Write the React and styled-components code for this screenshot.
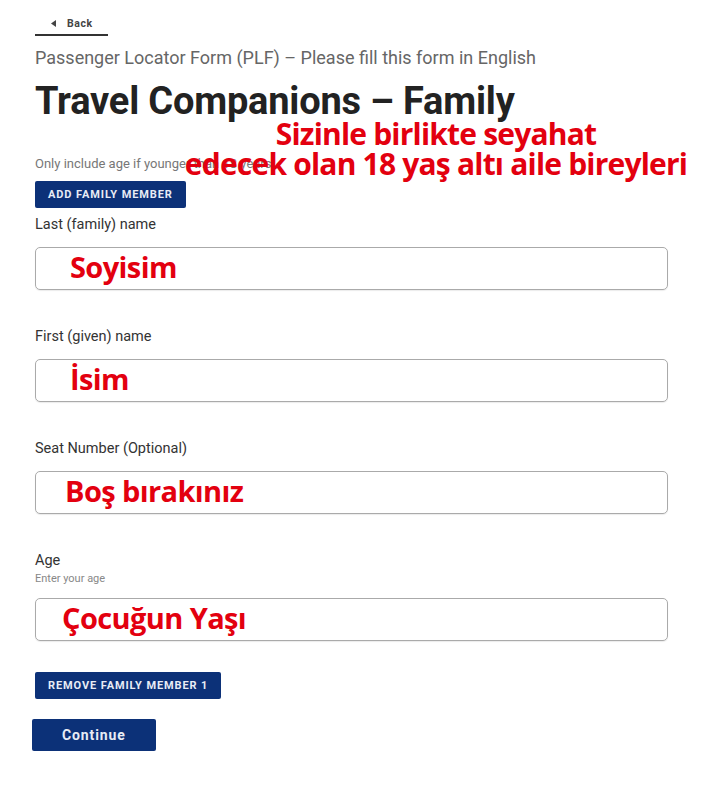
import React from 'react'
import styled, { createGlobalStyle } from 'styled-components'

const GlobalStyle = createGlobalStyle`
  html, body {
    margin: 0;
    padding: 0;
    background: #fff;
  }
  body {
    font-family: Roboto, "Liberation Sans", sans-serif;
    color: #222;
  }
`

const Page = styled.div`
  position: relative;
  width: 711px;
  height: 800px;
  padding: 12px 43px 0 35px;
  box-sizing: border-box;
`

const BackLink = styled.a`
  display: flex;
  align-items: center;
  gap: 11px;
  width: 73px;
  height: 24px;
  padding-left: 16px;
  box-sizing: border-box;
  border-bottom: 2px solid #333;
  color: #444;
  font-size: 10.5px;
  font-weight: 700;
  letter-spacing: 0.6px;
  text-decoration: none;
  cursor: pointer;
`

const Subtitle = styled.p`
  margin: 11px 0 0;
  font-size: 18px;
  line-height: 21px;
  color: #666;
`

const Title = styled.h1`
  margin: 11px 0 0;
  font-size: 38px;
  line-height: 44px;
  font-weight: 700;
  color: #222;
  letter-spacing: -0.2px;
`

const Hint = styled.p`
  margin: 33px 0 0;
  font-size: 13px;
  line-height: 15px;
  color: #777;
`

const Button = styled.button`
  display: block;
  border: none;
  border-radius: 2px;
  background: #0c3178;
  color: #e8ecf5;
  font-family: Roboto, "Liberation Sans", sans-serif;
  font-weight: 700;
  font-size: ${p => (p.$large ? '14px' : '11px')};
  letter-spacing: 0.9px;
  text-transform: ${p => (p.$large ? 'none' : 'uppercase')};
  height: ${p => (p.$large ? '32px' : '27px')};
  padding: 0 ${p => (p.$large ? '30px' : '13px')};
  margin: ${p => p.$margin || '0'};
  cursor: pointer;
`

const FieldGroup = styled.div`
  margin-top: ${p => p.$top || '0'};
`

const Label = styled.div`
  font-size: 14.5px;
  line-height: 17px;
  color: #333;
`

const SubLabel = styled.div`
  margin-top: 3px;
  font-size: 11px;
  line-height: 13px;
  color: #888;
`

const InputBox = styled.div`
  display: flex;
  align-items: center;
  height: 43px;
  margin-top: ${p => p.$gap || '14px'};
  padding-left: ${p => p.$indent || '34px'};
  box-sizing: border-box;
  border: 1.5px solid #aaa;
  border-radius: 5px;
  box-shadow: 0 1px 1px rgba(0, 0, 0, 0.08);
`

const Annotation = styled.span`
  font-family: "Open Sans", "Noto Sans", sans-serif;
  font-weight: 700;
  font-size: 29px;
  letter-spacing: -0.6px;
  color: #e3000f;
  line-height: 1;
  margin-top: -5px;
`

const Callout = styled.div`
  position: absolute;
  left: 182px;
  top: 119px;
  width: 508px;
  text-align: center;
  font-family: "Open Sans", "Noto Sans", sans-serif;
  font-weight: 700;
  font-size: 30px;
  line-height: 30px;
  letter-spacing: -0.8px;
  color: #e3000f;

  span {
    display: block;
  }
`

function ArrowLeft() {
  return (
    <svg width='5' height='7' viewBox='0 0 5 7'>
      <path d='M5 0 L0 3.5 L5 7 Z' fill='#444' />
    </svg>
  )
}

const fields = [
  { label: 'Last (family) name', note: 'Soyisim', top: '8px', indent: '34px' },
  { label: 'First (given) name', note: 'İsim', top: '38px', indent: '34px' },
  { label: 'Seat Number (Optional)', note: 'Boş bırakınız', top: '38px', indent: '29px' },
  { label: 'Age', sub: 'Enter your age', note: 'Çocuğun Yaşı', top: '38px', indent: '26px', gap: '13px' },
]

export default function App() {
  return (
    <>
      <GlobalStyle />
      <Page>
        <BackLink>
          <ArrowLeft />
          <span>Back</span>
        </BackLink>

        <Subtitle>Passenger Locator Form (PLF) – Please fill this form in English</Subtitle>
        <Title>Travel Companions – Family</Title>

        <Hint>Only include age if younger than 18 years</Hint>
        <Button $margin='10px 0 0'>Add family member</Button>

        {fields.map(f => (
          <FieldGroup key={f.label} $top={f.top}>
            <Label>{f.label}</Label>
            {f.sub && <SubLabel>{f.sub}</SubLabel>}
            <InputBox $indent={f.indent} $gap={f.gap}>
              <Annotation>{f.note}</Annotation>
            </InputBox>
          </FieldGroup>
        ))}

        <Button $margin='31px 0 0'>Remove family member 1</Button>
        <Button $large $margin='20px 0 0 -3px'>Continue</Button>

        <Callout>
          <span>Sizinle birlikte seyahat</span>
          <span>edecek olan 18 yaş altı aile bireyleri</span>
        </Callout>
      </Page>
    </>
  )
}
